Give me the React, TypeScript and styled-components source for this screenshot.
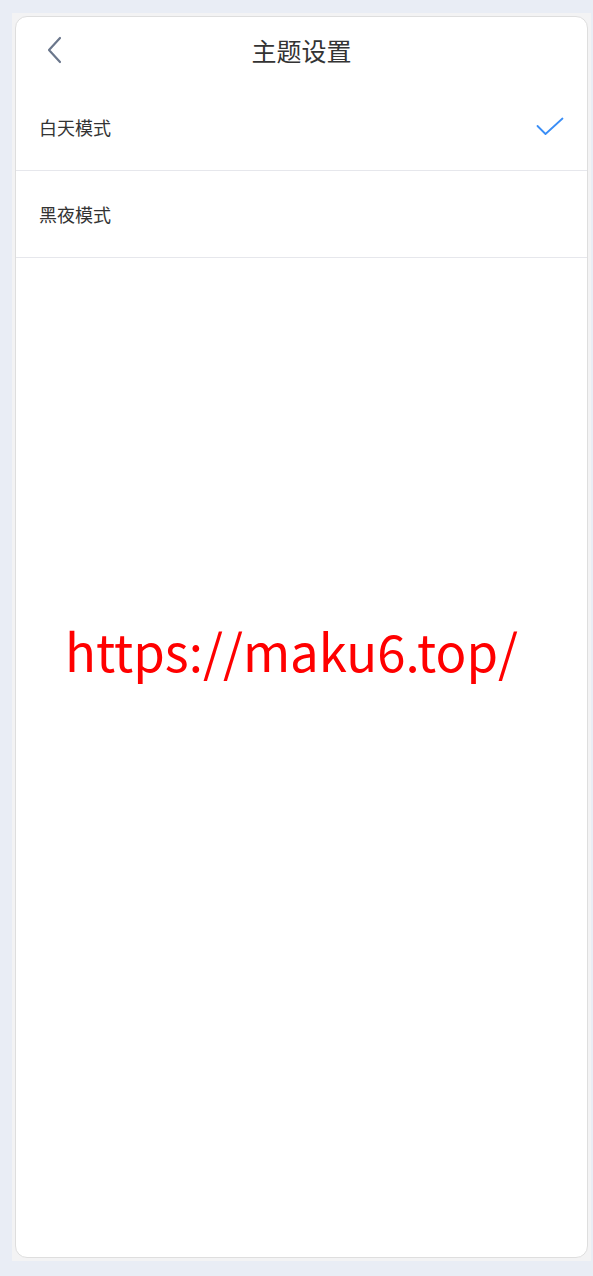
import React from 'react'
import styled, { createGlobalStyle } from 'styled-components'

const GlobalStyle = createGlobalStyle`
    html, body {
        margin: 0;
        padding: 0;
        background-color: #e9edf5;
        font-family: "Noto Sans", "Noto Sans CJK SC", sans-serif;
    }
`
const Page = styled.div`
    width: 593px;
    height: 1276px;
    padding: 13px 2px 15px 12px;
    box-sizing: border-box;
    position: relative;
`
const Frame = styled.div`
    height: 100%;
    padding: 3px;
    box-sizing: border-box;
    background-color: #f3f3f4;
`
const Card = styled.div`
    height: 100%;
    box-sizing: border-box;
    background-color: #fff;
    border: 1px solid #dedede;
    border-radius: 12px;
    overflow: hidden;
    display: flex;
    flex-direction: column;
`
const Header = styled.div`
    height: 67px;
    display: flex;
    align-items: center;
    justify-content: center;
    position: relative;
    flex-shrink: 0;
`
const BackButton = styled.button`
    position: absolute;
    left: 26px;
    top: 18px;
    width: 24px;
    height: 30px;
    padding: 0;
    border: none;
    background: none;
    cursor: pointer;
    display: flex;
    align-items: center;
    justify-content: center;
`
const Title = styled.h1`
    margin: 0 0 2px;
    font-size: 25px;
    font-weight: 400;
    color: #333;
    font-family: "Noto Sans CJK SC", sans-serif;
`
const List = styled.ul`
    margin: 0;
    padding: 0;
    list-style: none;
`
const Item = styled.li`
    height: 87px;
    box-sizing: border-box;
    border-bottom: 1px solid #e6e7ec;
    padding: 0 23px 0 23px;
    display: flex;
    align-items: center;
    justify-content: space-between;
`
const Label = styled.span`
    font-size: 18px;
    color: #333;
    font-family: "Noto Sans CJK SC", sans-serif;
`
const Watermark = styled.div`
    position: absolute;
    left: 0;
    right: 10px;
    top: 613px;
    text-align: center;
    font-size: 51px;
    color: #ff0000;
    font-family: "Noto Sans CJK SC", sans-serif;
    pointer-events: none;
`

const modes = [
    { name: '白天模式', active: true },
    { name: '黑夜模式', active: false },
]

const App = () => {
    return (
        <>
            <GlobalStyle />
            <Page>
                <Frame>
                    <Card>
                        <Header>
                            <BackButton aria-label="返回">
                                <svg width="18" height="28" viewBox="0 0 18 28" fill="none">
                                    <path d="M15 2 L4 14 L15 26" stroke="#6b778c" strokeWidth="2.2" strokeLinecap="round" strokeLinejoin="round" />
                                </svg>
                            </BackButton>
                            <Title>主题设置</Title>
                        </Header>
                        <List>
                            {modes.map((m) => (
                                <Item key={m.name}>
                                    <Label>{m.name}</Label>
                                    {m.active && (
                                        <svg width="28" height="20" viewBox="0 0 28 20" fill="none">
                                            <path d="M1.5 9 L9.5 17 L26.5 1.5" stroke="#3a8ef6" strokeWidth="1.8" strokeLinecap="round" strokeLinejoin="round" />
                                        </svg>
                                    )}
                                </Item>
                            ))}
                        </List>
                    </Card>
                </Frame>
                <Watermark>https://maku6.top/</Watermark>
            </Page>
        </>
    )
}

export default App
